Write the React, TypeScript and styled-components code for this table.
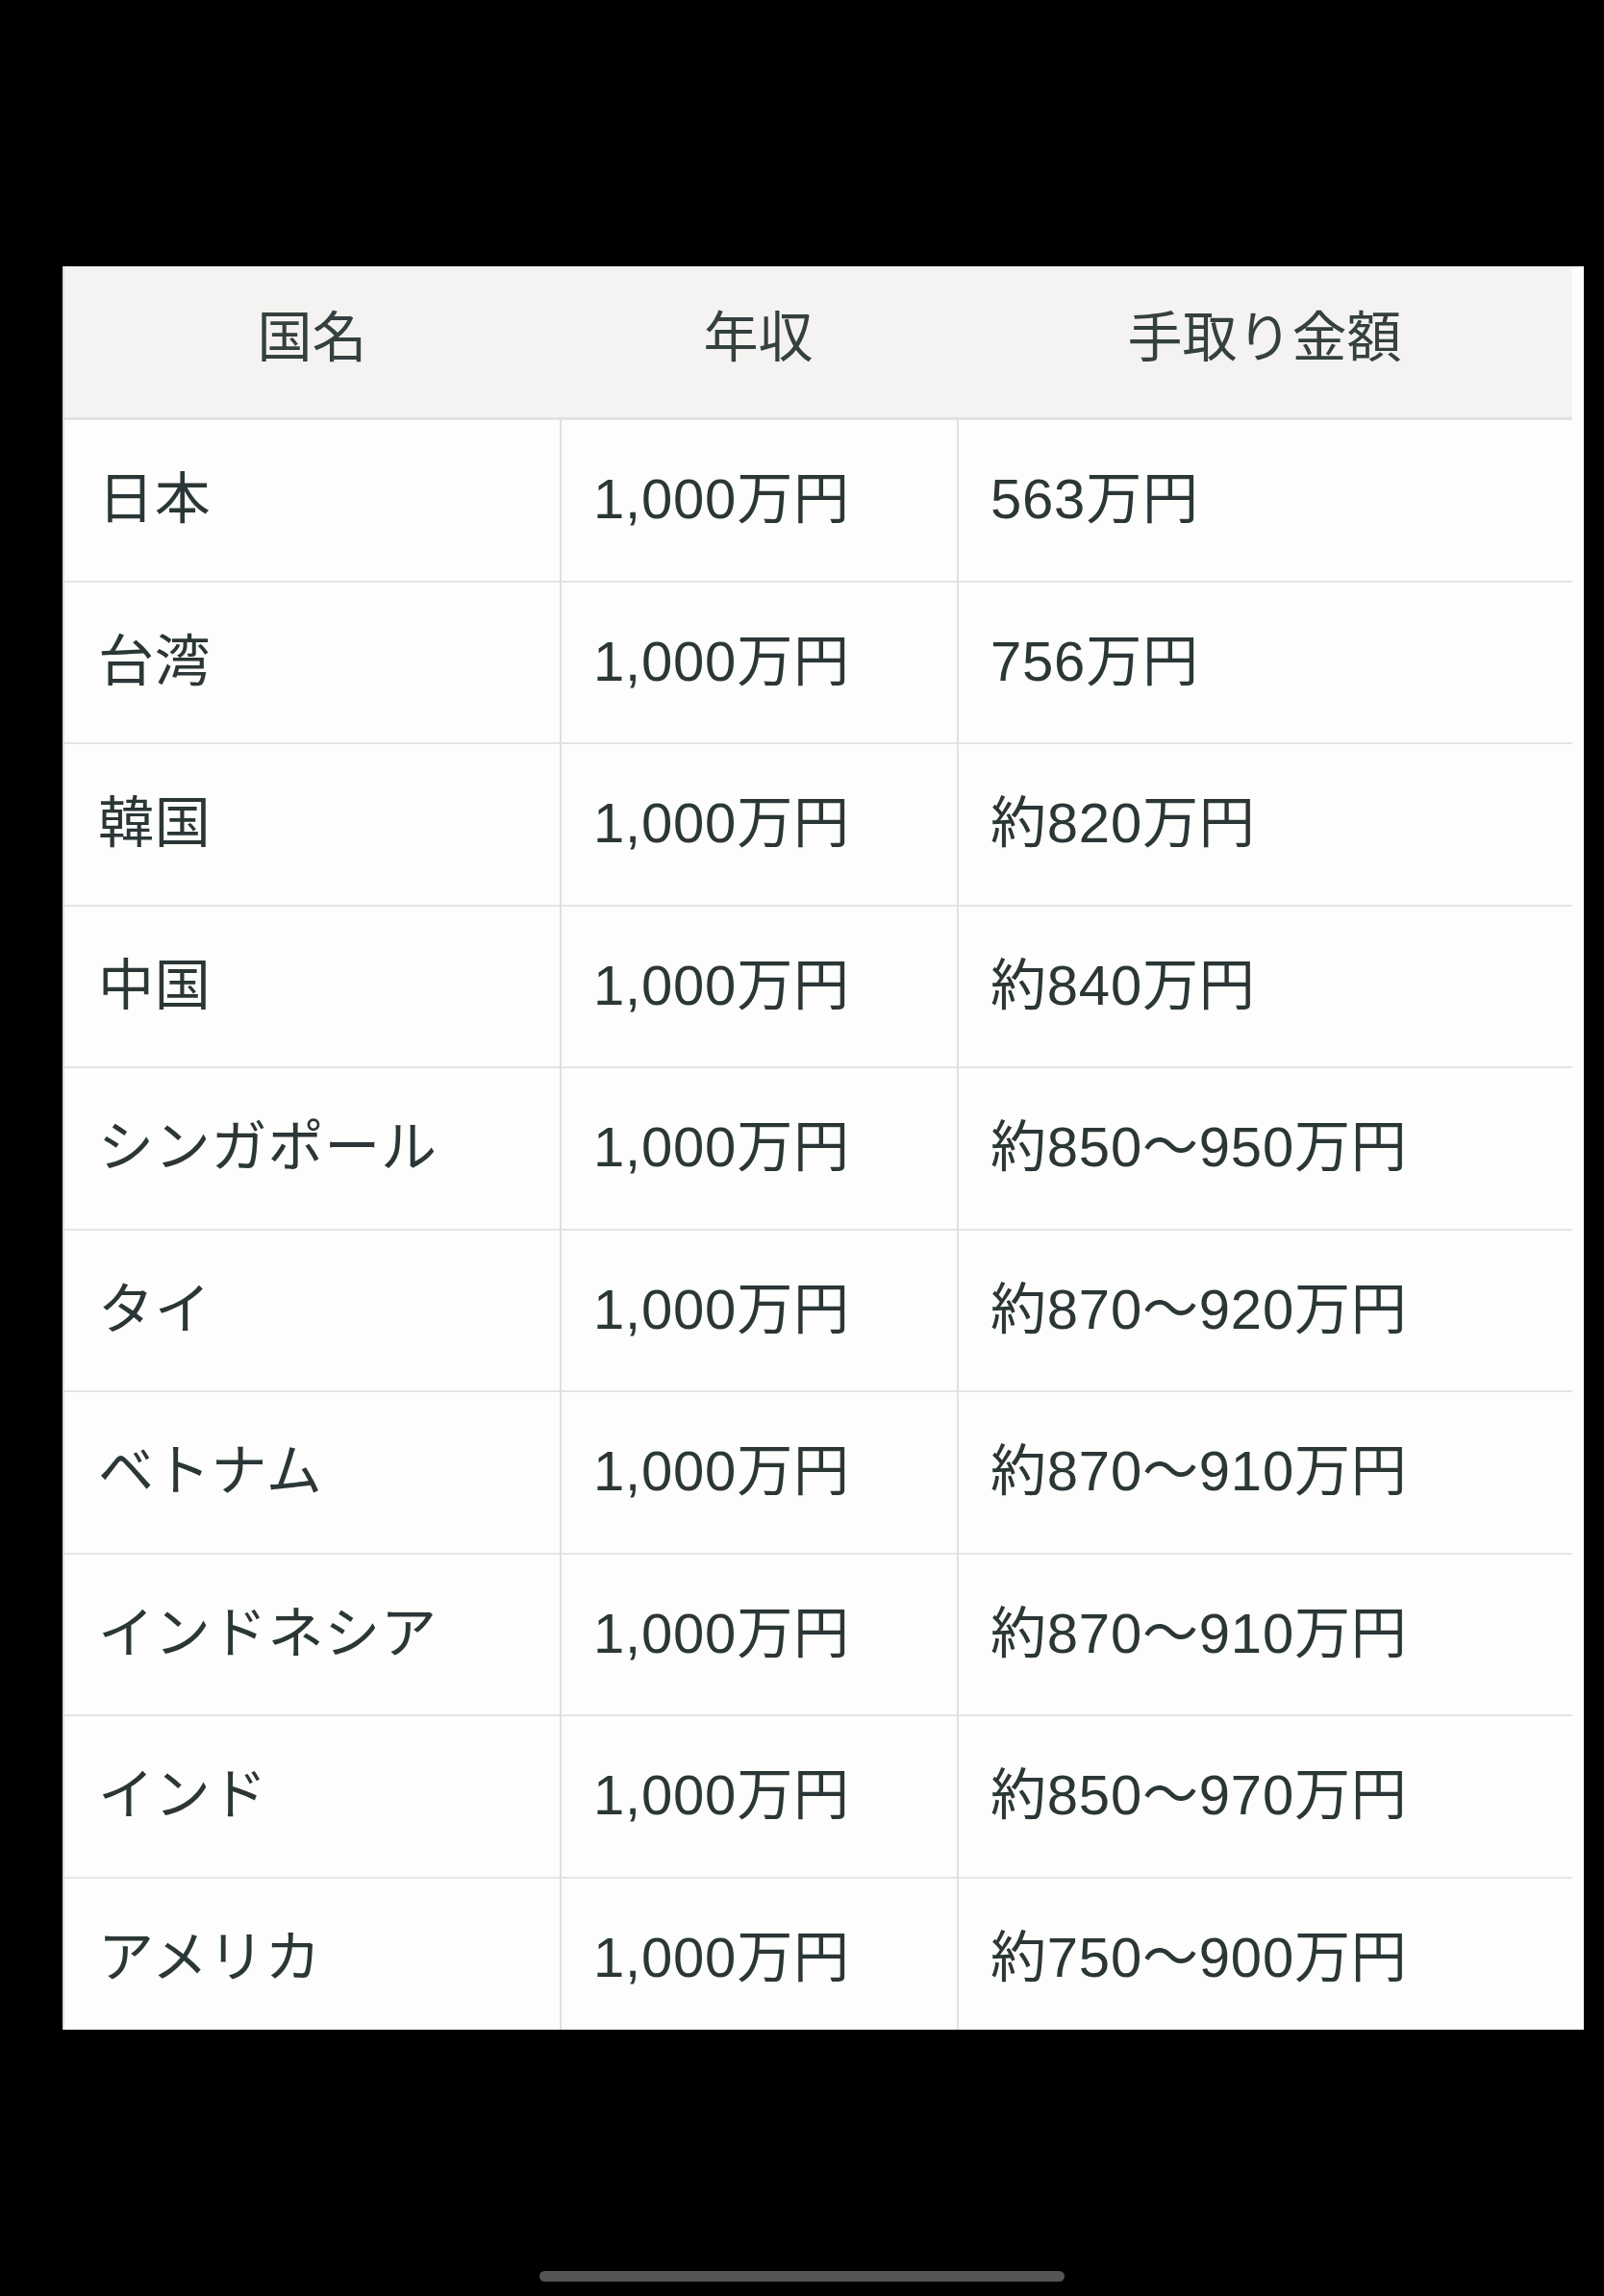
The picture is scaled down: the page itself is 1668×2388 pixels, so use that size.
import styled, { createGlobalStyle } from "styled-components";

const GlobalStyle = createGlobalStyle`
  html, body {
    margin: 0;
    padding: 0;
    background: #000;
  }
  * {
    box-sizing: border-box;
  }
`;

const Screen = styled.div`
  width: 1668px;
  height: 2388px;
  background: #000;
  display: flex;
  flex-direction: column;
  padding-top: 277px;
  font-family: "Liberation Sans", "Noto Sans CJK JP", sans-serif;
`;

const Card = styled.div`
  width: 1582px;
  height: 1834px;
  margin-left: 65px;
  padding-right: 12px;
  background: #fdfdfb;
  overflow: hidden;
  flex-shrink: 0;
`;

const Table = styled.div`
  display: grid;
  grid-template-columns: 515px 413px 1fr;
  border-left: 2px solid #dcdcda;
`;

const HeadCell = styled.div`
  height: 160px;
  background: #f4f3f1;
  border-bottom: 3px solid #e2e2e0;
  display: flex;
  align-items: center;
  justify-content: center;
  font-size: 57px;
  color: #354040;
  padding-bottom: 20px;
`;

const Cell = styled.div<{ $divider?: boolean }>`
  height: 168.5px;
  display: flex;
  align-items: center;
  padding-left: ${(props) => (props.$divider ? "33px" : "35px")};
  padding-bottom: 12px;
  border-bottom: 2px solid #e4e4e2;
  border-left: ${(props) => (props.$divider ? "2px solid #e0e0de" : "none")};
  font-size: 58px;
  color: #2b3637;
  white-space: nowrap;
  letter-spacing: 0.8px;
`;

const Bottom = styled.div`
  flex: 1;
  display: flex;
  justify-content: center;
  align-items: flex-end;
  padding-bottom: 15px;
`;

const HomeBar = styled.div`
  width: 546px;
  height: 11px;
  border-radius: 6px;
  background: #555;
`;

const rows: [string, string, string][] = [
  ["日本", "1,000万円", "563万円"],
  ["台湾", "1,000万円", "756万円"],
  ["韓国", "1,000万円", "約820万円"],
  ["中国", "1,000万円", "約840万円"],
  ["シンガポール", "1,000万円", "約850〜950万円"],
  ["タイ", "1,000万円", "約870〜920万円"],
  ["ベトナム", "1,000万円", "約870〜910万円"],
  ["インドネシア", "1,000万円", "約870〜910万円"],
  ["インド", "1,000万円", "約850〜970万円"],
  ["アメリカ", "1,000万円", "約750〜900万円"],
];

const App: React.FC = () => {
  return (
    <>
      <GlobalStyle />
      <Screen>
        <Card>
          <Table>
            <HeadCell>国名</HeadCell>
            <HeadCell>年収</HeadCell>
            <HeadCell>手取り金額</HeadCell>
            {rows.map((row) => (
              <>
                <Cell key={row[0] + "a"}>{row[0]}</Cell>
                <Cell key={row[0] + "b"} $divider>
                  {row[1]}
                </Cell>
                <Cell key={row[0] + "c"} $divider>
                  {row[2]}
                </Cell>
              </>
            ))}
          </Table>
        </Card>
        <Bottom>
          <HomeBar />
        </Bottom>
      </Screen>
    </>
  );
};

export default App;
